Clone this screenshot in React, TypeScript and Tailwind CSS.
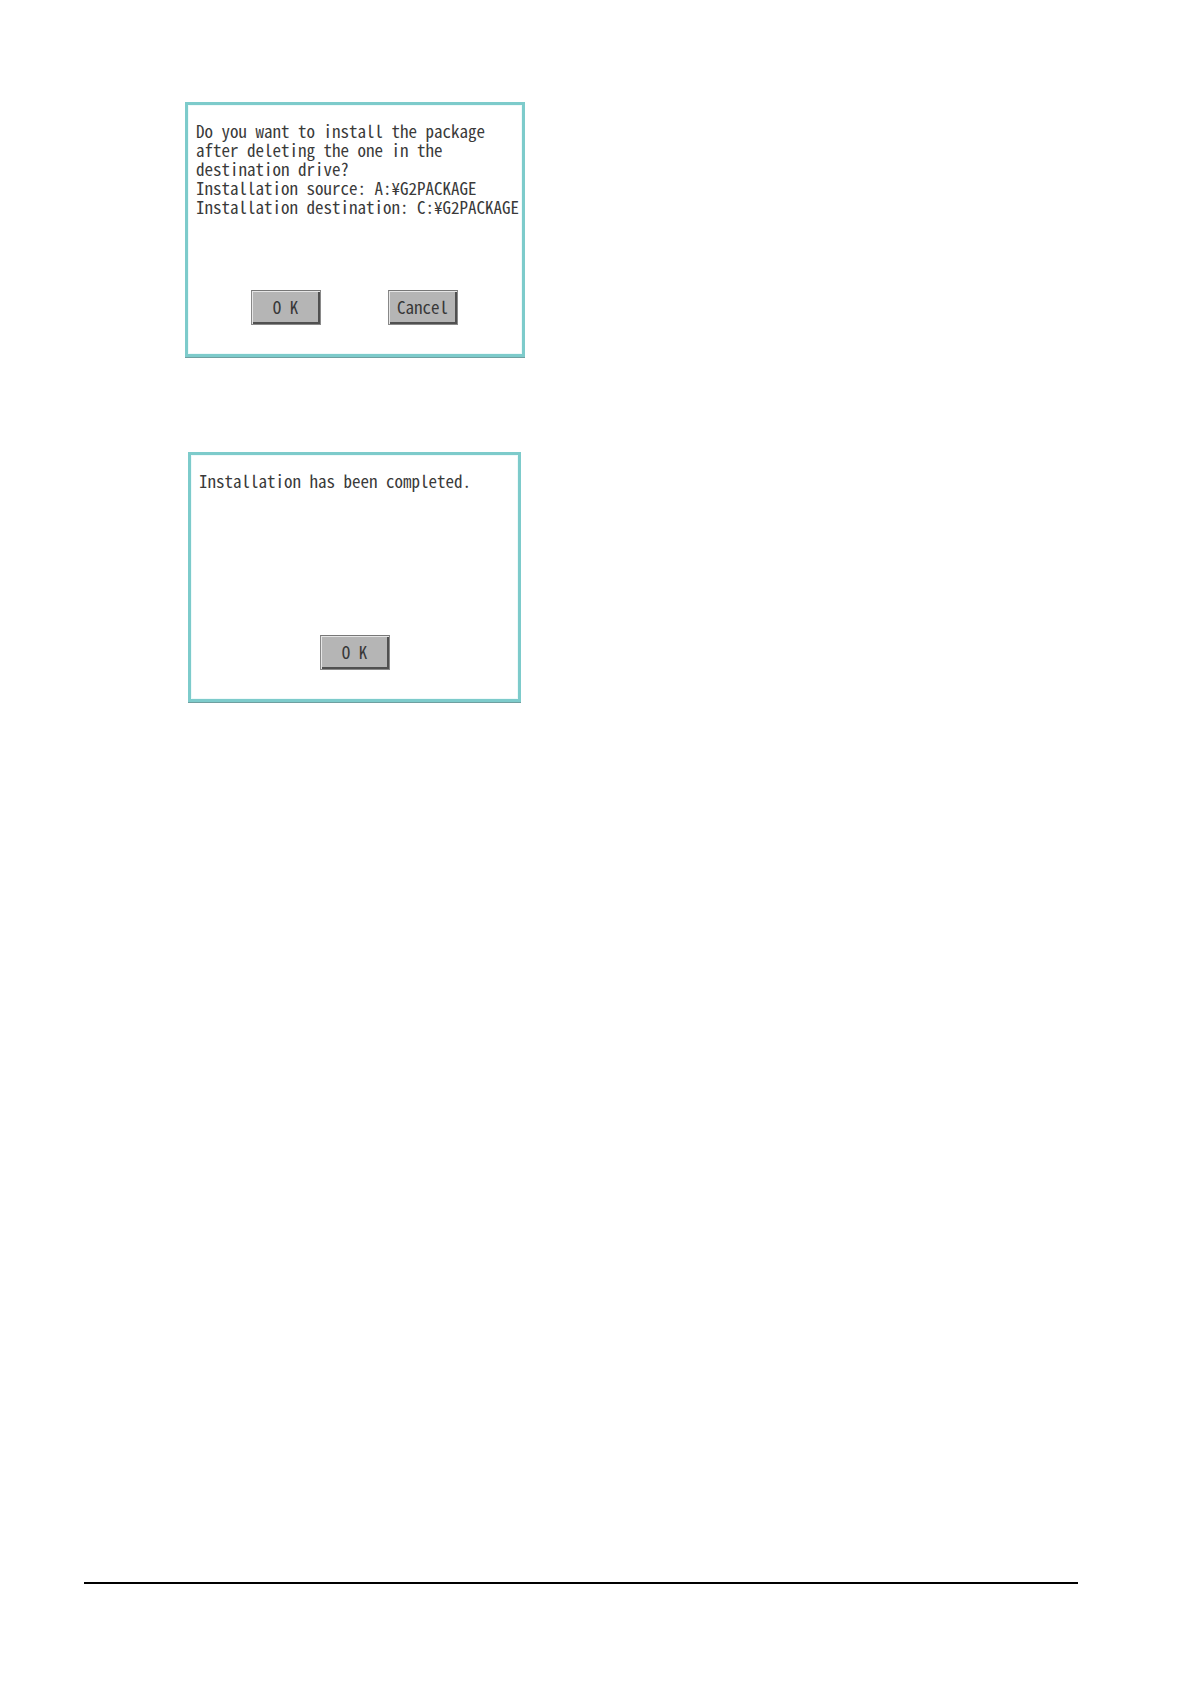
import type { ReactNode } from "react";

type DialogButtonProps = {
  children: ReactNode;
};

function DialogButton({ children }: DialogButtonProps) {
  return (
    <button
      type="button"
      className="h-[35px] w-[70px] border border-t-[#777777] border-r-[#8a8a8a] border-b-[#8a8a8a] border-l-[#888888] bg-[#b5b5b5] pb-0.5 text-center whitespace-pre text-[#383838] shadow-[inset_1px_1px_0_#e6e6e6,inset_-2px_-2px_0_#505050]"
    >
      {children}
    </button>
  );
}

export default function App() {
  return (
    <div className="flex min-h-screen flex-col bg-white pt-[102px] pr-28 pb-[100px] pl-[84px] font-['Noto_Sans_Mono_CJK_JP','Liberation_Mono',monospace] text-[17px] leading-[19px] text-[#3a3a3a]">
      <main className="flex flex-col items-start pl-[101px]">
        {/* Install confirmation */}
        <section
          role="dialog"
          aria-label="Install package"
          className="flex min-h-[255px] w-[340px] max-w-full flex-col justify-between border-3 border-[#7dcbcb] pt-4 pb-[29px] shadow-[inset_0_0_0_1px_#effafa,0_1px_0_#6f9fa0]"
        >
          <p className="pl-2 whitespace-nowrap">
            Do you want to install the package
            <br />
            after deleting the one in the
            <br />
            destination drive?
            <br />
            Installation source: A:¥G2PACKAGE
            <br />
            Installation destination: C:¥G2PACKAGE
          </p>
          <div className="flex justify-center gap-[67px] pr-0.5">
            <DialogButton>O K</DialogButton>
            <DialogButton>Cancel</DialogButton>
          </div>
        </section>

        {/* Completion message */}
        <section
          role="dialog"
          aria-label="Installation completed"
          className="mt-[95px] ml-[3px] flex min-h-[250px] w-[333px] max-w-full flex-col justify-between border-3 border-[#7dcbcb] pt-4 pb-[29px] shadow-[inset_0_0_0_1px_#effafa,0_1px_0_#6f9fa0]"
        >
          <p className="pl-2">Installation has been completed.</p>
          <div className="flex justify-center">
            <DialogButton>O K</DialogButton>
          </div>
        </section>
      </main>

      <hr className="mt-auto border-t-2 border-black" />
    </div>
  );
}
